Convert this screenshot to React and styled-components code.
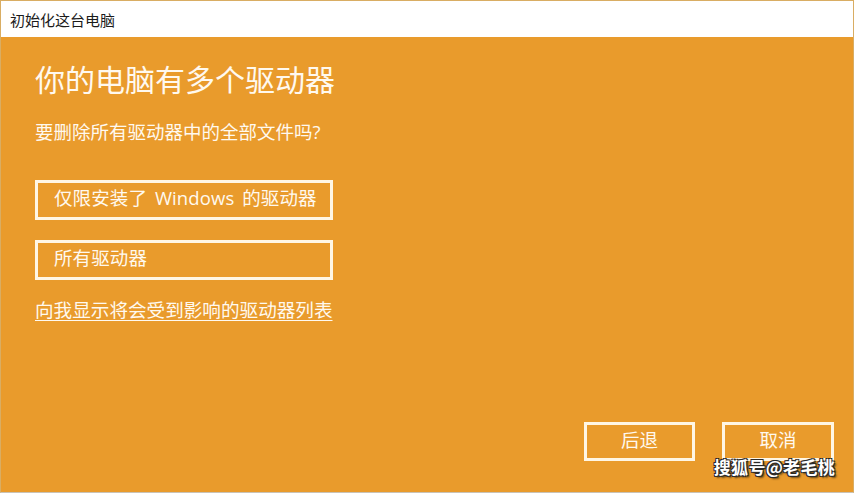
import React from "react";
import styled, { createGlobalStyle } from "styled-components";

const Global = createGlobalStyle`
  html, body { margin: 0; padding: 0; background: #ffffff; }
  body { font-family: "Open Sans", "Noto Sans CJK SC", sans-serif; }
`;

const Window = styled.div`
  position: relative;
  box-sizing: border-box;
  width: 854px;
  height: 493px;
  display: flex;
  flex-direction: column;
  border: 1px solid #d9ad63;
  border-bottom-color: #c9c2b6;
  background: #e99b2c;
`;

const TitleBar = styled.div`
  height: 36px;
  flex: none;
  background: #ffffff;
  display: flex;
  align-items: center;
  padding-left: 9px;
  font-size: 15px;
  color: #1b1b1b;
`;

const Content = styled.div`
  flex: 1;
  display: flex;
  flex-direction: column;
  align-items: flex-start;
  padding: 28px 19px 31px 34px;
  color: #fff9ef;
`;

const Heading = styled.h1`
  margin: 0;
  font-size: 30px;
  line-height: 1;
  font-weight: 400;
`;

const Question = styled.p`
  margin: 28px 0 0;
  font-size: 18.5px;
  line-height: 1;
`;

const Choices = styled.div`
  display: flex;
  flex-direction: column;
  gap: 20px;
  margin-top: 38px;
`;

const ChoiceButton = styled.button`
  box-sizing: border-box;
  width: 298px;
  height: 40px;
  border: 3px solid #fff6e4;
  background: transparent;
  color: #fff9ef;
  font-family: inherit;
  font-size: 18.5px;
  text-align: left;
  padding: 0 0 2px 16px;
  line-height: 1;
  word-spacing: 3px;
  letter-spacing: 0.1px;
`;

const Link = styled.a`
  margin-top: 21px;
  font-size: 18.6px;
  line-height: 1;
  color: #fff9ef;
  text-decoration: underline;
  text-underline-offset: 3px;
  text-decoration-thickness: 1px;
`;

const Footer = styled.div`
  margin-top: auto;
  align-self: stretch;
  display: flex;
  justify-content: flex-end;
  gap: 27px;
`;

const FooterButton = styled.button`
  box-sizing: border-box;
  width: ${(p) => p.$w}px;
  height: 39px;
  border: 3px solid #fff6e4;
  background: transparent;
  color: #fff9ef;
  font-family: inherit;
  font-size: 18.5px;
  line-height: 1;
  padding: 0 0 2px;
`;

const Watermark = styled.div`
  position: absolute;
  right: 18px;
  bottom: 13px;
  font-family: "Noto Sans CJK SC", sans-serif;
  font-size: 17px;
  font-weight: 700;
  color: #ffffff;
  letter-spacing: 0.3px;
  text-shadow: 1px 1px 0 #2a2a2a, -1px 1px 0 #2a2a2a, 1px -1px 0 #2a2a2a,
    -1px -1px 0 #2a2a2a, 2px 2px 2px rgba(0, 0, 0, 0.6);
`;

export default function App() {
  return (
    <>
      <Global />
      <Window>
        <TitleBar>初始化这台电脑</TitleBar>
        <Content>
          <Heading>你的电脑有多个驱动器</Heading>
          <Question>要删除所有驱动器中的全部文件吗?</Question>
          <Choices>
            <ChoiceButton>仅限安装了 Windows 的驱动器</ChoiceButton>
            <ChoiceButton>所有驱动器</ChoiceButton>
          </Choices>
          <Link href="#">向我显示将会受到影响的驱动器列表</Link>
          <Footer>
            <FooterButton $w={111}>后退</FooterButton>
            <FooterButton $w={112}>取消</FooterButton>
          </Footer>
        </Content>
        <Watermark>搜狐号@老毛桃</Watermark>
      </Window>
    </>
  );
}
